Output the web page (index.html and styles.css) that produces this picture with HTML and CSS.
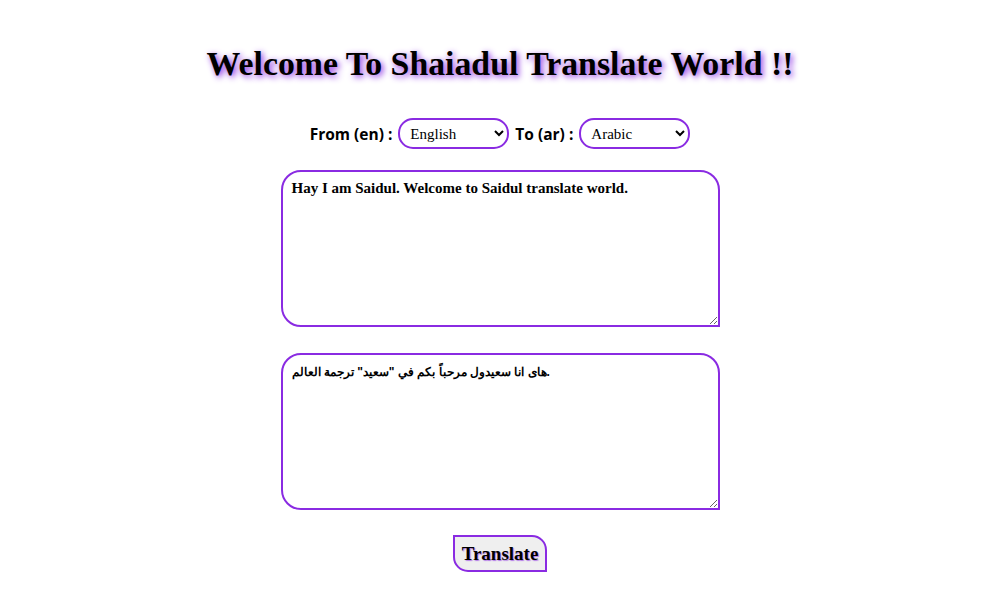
FILE: index.html
```html
<!DOCTYPE html>
<html>
<head>
<meta charset="utf-8">
<link rel="stylesheet" href="styles.css">
</head>
<body>
<div class="app">
  <h1 class="title">Welcome To Shaiadul Translate World !!</h1>
  <div class="langs">
    <label class="lbl">From (en) :</label>
    <select class="sel"><option>English</option></select>
    <label class="lbl">To (ar) :</label>
    <select class="sel"><option>Arabic</option></select>
  </div>
  <textarea class="box src">Hay I am Saidul. Welcome to Saidul translate world.</textarea>
  <textarea class="box out">هاى انا سعيدول مرحباً بكم في "سعيد" ترجمة العالم.</textarea>
  <button class="btn">Translate</button>
</div>
</body>
</html>
```
FILE: styles.css
```css
html, body { margin: 0; padding: 0; background: #fff; }
.app {
  display: flex;
  flex-direction: column;
  align-items: center;
  padding-top: 44px;
  padding-right: 4px;
}
.title {
  margin: 0;
  font-family: "Liberation Serif", serif;
  font-weight: bold;
  font-size: 33.8px;
  line-height: 40px;
  color: #000;
  text-shadow: 2px 2px 6px #8a2be2;
}
.langs {
  margin-top: 34px;
  display: flex;
  align-items: center;
  gap: 6px;
}
.lbl {
  font-family: "Open Sans", sans-serif;
  font-weight: bold;
  font-size: 15.5px;
}
.sel {
  width: 111px;
  height: 31px;
  border: 2px solid #8a2be2;
  border-radius: 15px;
  background: #fff;
  font-family: "Liberation Serif", serif;
  font-size: 15px;
  padding: 0 6px;
  color: #000;
}
.box {
  box-sizing: border-box;
  width: 439px;
  height: 157px;
  border: 2px solid #8a2be2;
  border-radius: 20px 20px 0 20px;
  padding: 8px 9px;
  outline: none;
  font-family: "Liberation Serif", serif;
  font-weight: bold;
  font-size: 15px;
  color: #000;
  resize: both;
}
.src { margin-top: 21px; }
.out {
  margin-top: 26px;
  font-family: "Liberation Sans", sans-serif;
  font-size: 12px;
  padding-top: 10px;
}
.btn {
  margin-top: 25px;
  box-sizing: border-box;
  width: 94px;
  height: 37px;
  border: 2px solid #8a2be2;
  border-radius: 0 15px 0 15px;
  background: #efefef;
  font-family: "Liberation Serif", serif;
  font-weight: bold;
  font-size: 19px;
  padding: 0;
  color: #000;
  text-shadow: 1px 1px 1px rgba(138, 43, 226, 0.6);
}
```
